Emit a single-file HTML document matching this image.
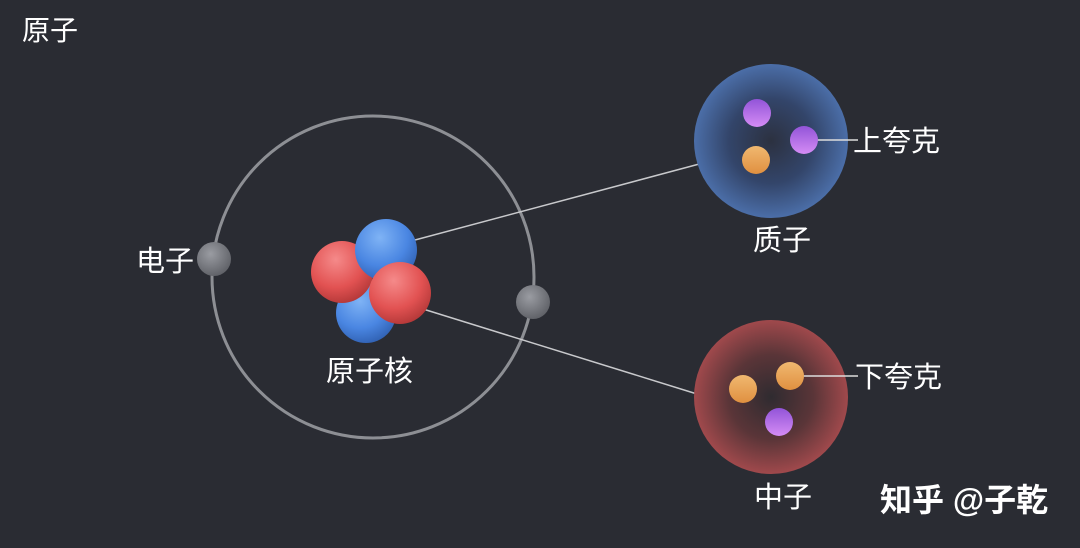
<!DOCTYPE html>
<html><head><meta charset="utf-8"><style>
html,body{margin:0;padding:0;background:#2a2c33;}
svg{display:block}
text{font-family:"Liberation Sans","Noto Sans CJK SC",sans-serif;fill:#fff}
</style></head><body>
<svg width="1080" height="548" viewBox="0 0 1080 548">
<defs>
<radialGradient id="gb" cx="0.4" cy="0.3" r="0.75"><stop offset="0" stop-color="#7fb3f5"/><stop offset="0.6" stop-color="#4a86e2"/><stop offset="1" stop-color="#2f5fb0"/></radialGradient>
<radialGradient id="gr" cx="0.4" cy="0.3" r="0.75"><stop offset="0" stop-color="#f58a8a"/><stop offset="0.6" stop-color="#e25252"/><stop offset="1" stop-color="#b03636"/></radialGradient>
<radialGradient id="ge" cx="0.4" cy="0.35" r="0.7"><stop offset="0" stop-color="#9a9ca2"/><stop offset="1" stop-color="#5d5f65"/></radialGradient>
<radialGradient id="gp" cx="0.5" cy="0.5" r="0.5"><stop offset="0" stop-color="#2c3140"/><stop offset="0.55" stop-color="#33456a"/><stop offset="1" stop-color="#4b6ea8"/></radialGradient>
<radialGradient id="gn" cx="0.5" cy="0.5" r="0.5"><stop offset="0" stop-color="#2f2b30"/><stop offset="0.55" stop-color="#5a3538"/><stop offset="1" stop-color="#a0494c"/></radialGradient>
<linearGradient id="qp" x1="0" y1="0" x2="0" y2="1"><stop offset="0" stop-color="#9254d8"/><stop offset="1" stop-color="#d58cf5"/></linearGradient>
<linearGradient id="qo" x1="0" y1="0" x2="0" y2="1"><stop offset="0" stop-color="#f0b870"/><stop offset="1" stop-color="#e09040"/></linearGradient>
</defs>
<text x="22" y="40" font-size="28">原子</text>
<circle cx="373" cy="277" r="161" fill="none" stroke="#8d8f94" stroke-width="3"/>
<line x1="415" y1="240" x2="703" y2="163" stroke="#c8c9cc" stroke-width="1.5"/>
<line x1="423" y1="309" x2="697" y2="394" stroke="#c8c9cc" stroke-width="1.5"/>
<circle cx="214" cy="259" r="17" fill="url(#ge)"/>
<circle cx="533" cy="302" r="17" fill="url(#ge)"/>
<circle cx="366" cy="313" r="30" fill="url(#gb)"/>
<circle cx="342" cy="272" r="31" fill="url(#gr)"/>
<circle cx="386" cy="250" r="31" fill="url(#gb)"/>
<circle cx="400" cy="293" r="31" fill="url(#gr)"/>
<circle cx="771" cy="141" r="77" fill="url(#gp)"/>
<circle cx="771" cy="397" r="77" fill="url(#gn)"/>
<line x1="816" y1="140" x2="858" y2="140" stroke="#ddd" stroke-width="1.5"/>
<line x1="803" y1="376" x2="858" y2="376" stroke="#ddd" stroke-width="1.5"/>
<circle cx="757" cy="113" r="14" fill="url(#qp)"/>
<circle cx="804" cy="140" r="14" fill="url(#qp)"/>
<circle cx="756" cy="160" r="14" fill="url(#qo)"/>
<circle cx="743" cy="389" r="14" fill="url(#qo)"/>
<circle cx="790" cy="376" r="14" fill="url(#qo)"/>
<circle cx="779" cy="422" r="14" fill="url(#qp)"/>
<text x="136" y="271" font-size="29">电子</text>
<text x="326" y="381" font-size="29">原子核</text>
<text x="753" y="250" font-size="29">质子</text>
<text x="853" y="151" font-size="29">上夸克</text>
<text x="855" y="387" font-size="29">下夸克</text>
<text x="754" y="507" font-size="29">中子</text>
<text x="880" y="511" font-size="32" font-weight="bold">知乎 @子乾</text>
</svg>
</body></html>
